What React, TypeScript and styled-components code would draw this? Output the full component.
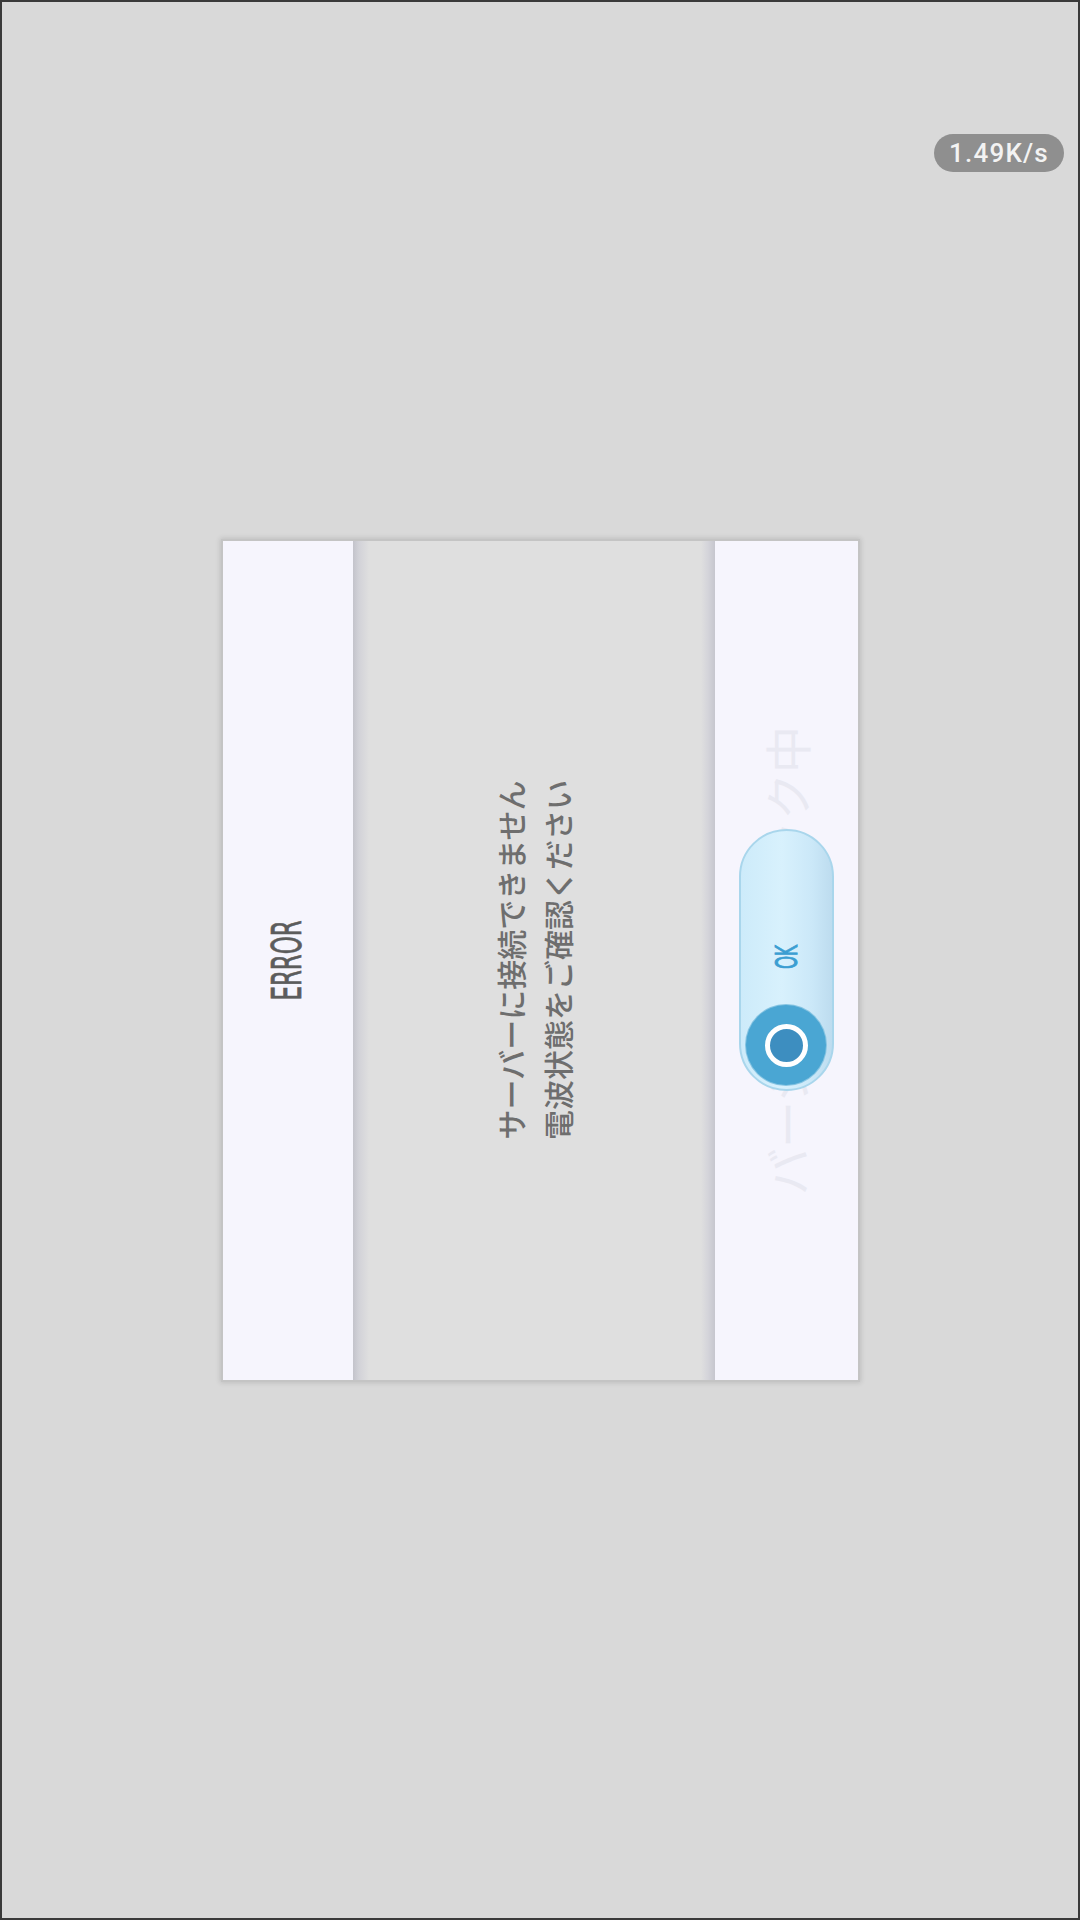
import React from 'react';
import styled, { createGlobalStyle } from 'styled-components';

const GlobalStyle = createGlobalStyle`
  html, body {
    margin: 0;
    padding: 0;
  }
  body {
    width: 1080px;
    height: 1920px;
    overflow: hidden;
    background: #d9d9d9;
    font-family: 'Noto Sans CJK JP', 'Noto Sans', sans-serif;
  }
  * {
    box-sizing: border-box;
  }
`;

const Screen = styled.div`
  position: relative;
  width: 1080px;
  height: 1920px;
  border: 2px solid #3a3a3a;
  background: #d9d9d9;
  display: grid;
  place-items: center;
`;

const SpeedBadge = styled.div`
  position: absolute;
  top: 132px;
  right: 14px;
  width: 130px;
  height: 38px;
  border-radius: 19px;
  background: #8f8f8f;
  color: #f3f3f3;
  font-family: Roboto, 'Liberation Sans', sans-serif;
  font-weight: 500;
  font-size: 26px;
  letter-spacing: 1.2px;
  display: flex;
  align-items: center;
  justify-content: center;
`;

const Dialog = styled.div`
  width: 635px;
  height: 839px;
  display: flex;
  background: #dfdfdf;
  box-shadow: 0 0 0 2px #c4c4c4, 0 0 5px 3px rgba(0, 0, 0, 0.12);
`;

const SidePanel = styled.div<{ $width: number }>`
  width: ${p => p.$width}px;
  flex-shrink: 0;
  background: #f6f5fd;
  display: flex;
  align-items: center;
  justify-content: center;
`;

const CenterPanel = styled.div`
  flex: 1;
  background: linear-gradient(
    90deg,
    #c3c3cb 0px,
    #d2d2d8 6px,
    #dfdfdf 16px,
    #dfdfdf calc(100% - 14px),
    #d4d4da calc(100% - 7px),
    #c6c6ce 100%
  );
  display: flex;
  align-items: center;
  justify-content: center;
`;

const Title = styled.div`
  flex-shrink: 0;
  font-family: 'DejaVu Sans Condensed', 'DejaVu Sans', sans-serif;
  font-stretch: condensed;
  font-weight: 400;
  font-size: 41px;
  line-height: 1;
  color: #5c5c5c;
  white-space: nowrap;
  transform: rotate(-90deg) scaleX(0.62);
  -webkit-text-stroke: 0.7px #5c5c5c;
`;

const Message = styled.div`
  flex-shrink: 0;
  font-family: 'Noto Sans CJK JP', sans-serif;
  font-weight: 500;
  font-size: 30px;
  line-height: 47px;
  color: #6e6e6e;
  white-space: nowrap;
  text-align: center;
  transform: rotate(-90deg);
`;

const Stack = styled.div`
  display: grid;
  place-items: center;
  > * {
    grid-area: 1 / 1;
  }
`;

const GhostText = styled.div`
  font-family: 'Noto Sans CJK JP', sans-serif;
  font-size: 47px;
  line-height: 1;
  color: #e9e9f2;
  white-space: nowrap;
  transform: rotate(-90deg);
`;

const OkPill = styled.button`
  position: relative;
  z-index: 1;
  width: 95px;
  height: 262px;
  padding: 0 0 4px;
  border: 2px solid #a9d6ec;
  border-radius: 48px;
  background: linear-gradient(90deg, #cdebfa 0%, #d8f1fd 45%, #cbe8f8 78%, #bddcef 100%);
  display: flex;
  flex-direction: column;
  align-items: center;
  justify-content: flex-end;
  cursor: pointer;
`;

const OkLabel = styled.span`
  width: 30px;
  height: 30px;
  margin-bottom: 33px;
  display: flex;
  align-items: center;
  justify-content: center;
  font-family: 'DejaVu Sans Condensed', 'DejaVu Sans', sans-serif;
  font-stretch: condensed;
  font-weight: 400;
  font-size: 31px;
  color: #3b9ed2;
  -webkit-text-stroke: 1px #3b9ed2;
  transform: rotate(-90deg) scaleX(0.6);
`;

const Knob = styled.span`
  width: 80px;
  height: 80px;
  border-radius: 50%;
  background: #4aa6d3;
  box-shadow: 0 0 0 1px #86c4e2;
  display: flex;
  align-items: center;
  justify-content: center;
`;

const KnobRing = styled.span`
  width: 43px;
  height: 43px;
  border-radius: 50%;
  border: 5px solid #ffffff;
  background: #3d8ec0;
`;

export default function App() {
  return (
    <>
      <GlobalStyle />
      <Screen>
        <SpeedBadge>1.49K/s</SpeedBadge>
        <Dialog>
          <SidePanel $width={130}>
            <Title>ERROR</Title>
          </SidePanel>
          <CenterPanel>
            <Message>
              サーバーに接続できません
              <br />
              電波状態をご確認ください
            </Message>
          </CenterPanel>
          <SidePanel $width={143}>
            <Stack>
              <GhostText>バージョンチェック中</GhostText>
              <OkPill type="button">
                <OkLabel>OK</OkLabel>
                <Knob>
                  <KnobRing />
                </Knob>
              </OkPill>
            </Stack>
          </SidePanel>
        </Dialog>
      </Screen>
    </>
  );
}
